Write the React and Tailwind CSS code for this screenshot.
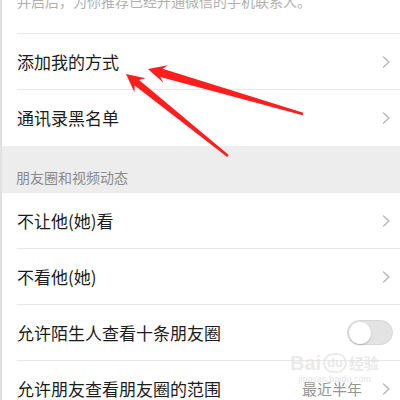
import React from "react";

const font = { fontFamily: '"Noto Sans CJK SC", "Noto Sans", sans-serif' };

function Chevron() {
  return (
    <svg width="9" height="12" viewBox="0 0 9 12" className="shrink-0">
      <path d="M1.5 1 L7 6 L1.5 11" fill="none" stroke="#b5b5b5" strokeWidth="1.4" strokeLinecap="round" strokeLinejoin="round" />
    </svg>
  );
}

function Row({ label, right, border = true }) {
  return (
    <div className="pl-[15px] bg-white">
      <div className={`flex items-center h-[56px] pr-[9px] ${border ? "border-b border-[#e8e8e8]" : ""}`}>
        <span className="flex-1 text-[17px] leading-[24px] text-[#1c1c1c] whitespace-nowrap">{label}</span>
        {right}
      </div>
    </div>
  );
}

function Toggle() {
  return (
    <div className="-mr-[2px] w-[46px] h-[25px] rounded-full bg-[#e3e3e3] border border-[#d6d6d6] flex items-center px-[1px]">
      <div className="w-[22px] h-[22px] rounded-full bg-white shadow-[0_1px_2px_rgba(0,0,0,0.2)]" />
    </div>
  );
}

export default function App() {
  return (
    <div className="relative w-[400px] h-[400px] overflow-hidden bg-white border-l-[2px] border-[#e0e0e0]" style={font}>
      <div className="pl-[15px] bg-white">
        <div className="h-[34px] border-b border-[#e8e8e8] overflow-hidden">
          <div className="-mt-[9px] text-[14px] leading-[20px] text-[#b0b0b0] whitespace-nowrap">并启后，为你推荐已经开通微信的手机联系人。</div>
        </div>
      </div>
      <Row label="添加我的方式" right={<Chevron />} />
      <Row label="通讯录黑名单" right={<Chevron />} border={false} />
      <div className="bg-[#ededed] pl-[14px] pt-[21px] pb-[6px]">
        <div className="text-[14px] leading-[20px] text-[#8a8a8a]">朋友圈和视频动态</div>
      </div>
      <Row label="不让他(她)看" right={<Chevron />} />
      <Row label="不看他(她)" right={<Chevron />} />
      <Row label="允许陌生人查看十条朋友圈" right={<Toggle />} />
      <Row
        label="允许朋友查看朋友圈的范围"
        border={false}
        right={
          <div className="flex items-center gap-[20px]">
            <span className="text-[15px] text-[#959595]">最近半年</span>
            <Chevron />
          </div>
        }
      />

      {/* watermark */}
      <div className="absolute left-[288px] top-[352px] flex flex-col items-center pointer-events-none">
        <div className="flex items-center gap-[2px] text-[20px] leading-[22px] font-bold text-[rgba(225,225,225,0.7)]" style={{ fontFamily: '"Liberation Sans", sans-serif' }}>
          <span>Bai</span>
          <span className="rounded-full border-2 border-[rgba(225,225,225,0.7)] px-[2px] text-[13px] leading-[16px]">du</span>
          <span className="text-[15px]" style={font}>经验</span>
        </div>
        <div className="text-[9px] leading-[10px] text-[rgba(215,215,215,0.7)]" style={{ fontFamily: '"Liberation Sans", sans-serif' }}>jingyan.baidu.com</div>
      </div>

      {/* arrows */}
      <svg className="absolute left-[-2px] top-0 pointer-events-none" width="400" height="400" viewBox="0 0 400 400">
        <polygon
          fill="#ff1e1e"
          points="148,69 167.8,65.3 162.6,68.8 303.3,112.8 302.7,115.2 160.3,77.0 163.4,82.7"
        />
        <polygon
          fill="#ff1e1e"
          points="126,74 145.6,78.3 139.1,79.9 228.8,155.0 227.2,157.0 134.7,85.5 134.4,92.3"
        />
      </svg>
    </div>
  );
}
